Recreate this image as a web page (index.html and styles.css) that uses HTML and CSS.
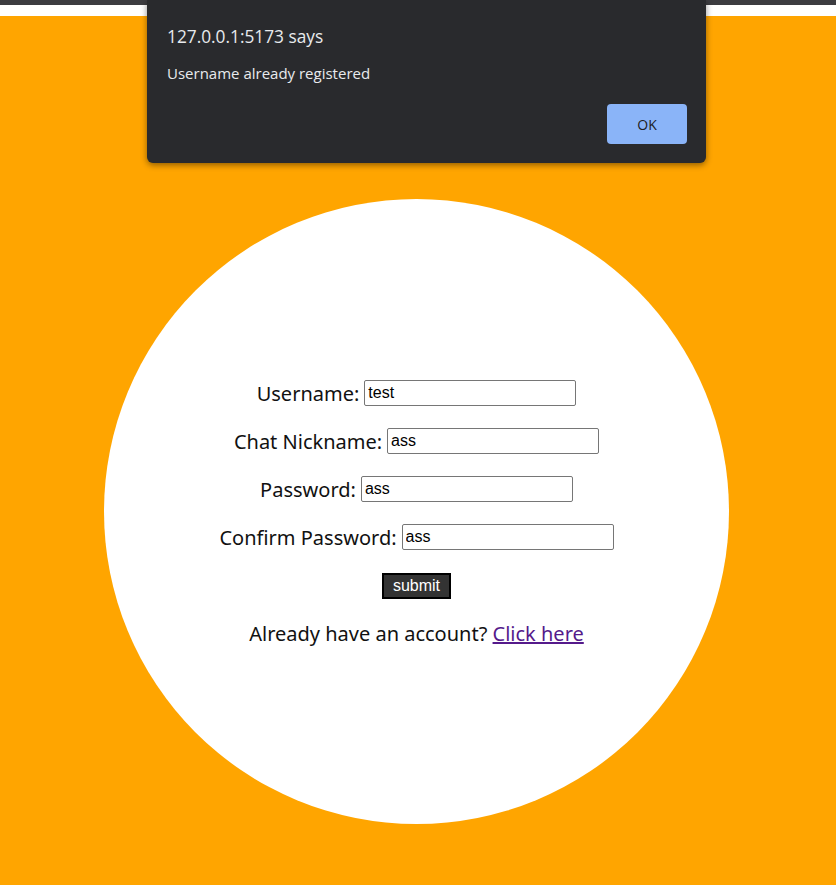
FILE: index.html
```html
<!DOCTYPE html>
<html>
<head>
<meta charset="utf-8">
<link rel="stylesheet" href="styles.css">
</head>
<body>
<div class="chrome"></div>
<div class="header"></div>
<main class="stage">
  <div class="circle">
    <form class="form">
      <div class="row"><label>Username:</label> <input type="text" value="test"></div>
      <div class="row"><label>Chat Nickname:</label> <input type="text" value="ass"></div>
      <div class="row"><label>Password:</label> <input type="text" value="ass"></div>
      <div class="row"><label>Confirm Password:</label> <input type="text" value="ass"></div>
      <div class="row row-submit"><button type="button" class="submit">submit</button></div>
      <div class="row"><span>Already have an account? <a href="#" class="link">Click here</a></span></div>
    </form>
  </div>
</main>
<div class="dialog">
  <div class="dialog-title">127.0.0.1:5173 says</div>
  <div class="dialog-msg">Username already registered</div>
  <div class="dialog-actions"><button type="button" class="ok">OK</button></div>
</div>
</body>
</html>
```
FILE: styles.css
```css
html, body {
  margin: 0;
  padding: 0;
}
body {
  background: #ffa500;
  width: 836px;
  height: 885px;
  overflow: hidden;
  position: relative;
}
.chrome {
  height: 5px;
  background: #3c3c40;
}
.header {
  height: 11px;
  background: #ffffff;
}
.stage {
  display: flex;
  justify-content: center;
  padding-top: 183px;
  padding-right: 3px;
}
.circle {
  width: 625px;
  height: 625px;
  border-radius: 50%;
  background: #ffffff;
  display: flex;
  align-items: center;
  justify-content: center;
}
.form {
  display: flex;
  flex-direction: column;
  align-items: center;
  gap: 22px;
  font-family: "Noto Sans", sans-serif;
  font-size: 20px;
  color: #111;
  margin-top: 3px;
}
.row {
  display: flex;
  align-items: center;
  height: 26px;
  white-space: pre;
}
.row-submit {
  margin-top: 1px;
  margin-bottom: -1px;
}
.row label {
  margin-right: 5px;
}
.row input {
  box-sizing: border-box;
  width: 212px;
  height: 26px;
  border: 1px solid #767676;
  border-radius: 2px;
  padding: 1px 3px;
  font-family: "Liberation Sans", Arial, sans-serif;
  font-size: 16px;
  color: #000;
}
.submit {
  box-sizing: border-box;
  height: 26px;
  padding: 0 9px;
  background: #333333;
  color: #ffffff;
  border: 2px solid #000;
  font-family: "Liberation Sans", Arial, sans-serif;
  font-size: 16px;
}
.link {
  color: #551a8b;
}
.dialog {
  position: absolute;
  left: 147px;
  top: 0;
  width: 559px;
  height: 163px;
  box-sizing: border-box;
  background: #292a2d;
  border-radius: 0 0 6px 6px;
  box-shadow: 0 2px 6px rgba(0,0,0,0.45);
  padding: 25px 19px 20px 20px;
  font-family: "Open Sans", "Noto Sans", sans-serif;
  color: #e8eaed;
}
.dialog-title {
  font-size: 17.3px;
  line-height: 24px;
}
.dialog-msg {
  font-size: 15px;
  line-height: 20px;
  margin-top: 14px;
}
.dialog-actions {
  display: flex;
  justify-content: flex-end;
  margin-top: 21px;
}
.ok {
  width: 80px;
  height: 40px;
  border: none;
  border-radius: 4px;
  background: #8ab4f8;
  color: #202124;
  font-family: "Open Sans", "Noto Sans", sans-serif;
  font-size: 14px;
}
```
